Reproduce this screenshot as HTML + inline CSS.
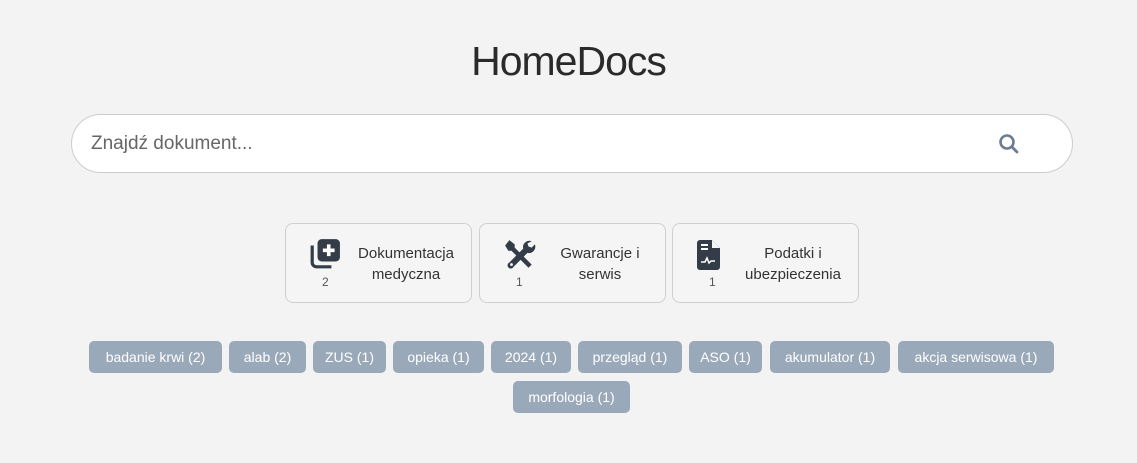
<!DOCTYPE html>
<html><head><meta charset="utf-8"><style>
*{box-sizing:border-box;margin:0;padding:0}
body{width:1137px;height:463px;background:#f3f3f3;font-family:"Liberation Sans",sans-serif;position:relative;overflow:hidden}
h1{position:absolute;top:38px;left:0;width:1137px;text-align:center;font-weight:400;font-size:41px;color:#2a2a2a;letter-spacing:-1px}
.search{position:absolute;left:71px;top:114px;width:1002px;height:59px;background:#fff;border:1px solid #ccc;border-radius:30px}
.search span{position:absolute;left:19px;top:18px;font-size:19px;color:#666}
.search svg{position:absolute;left:926px;top:18px}
.card{position:absolute;top:223px;width:187px;height:80px;background:#f5f5f5;border:1px solid #cfcfcf;border-radius:8px}
.card svg{position:absolute;left:23px;top:14px}
.card .n{position:absolute;left:36px;top:51px;font-size:12px;color:#555}
.card .t{position:absolute;left:62px;width:116px;top:19px;text-align:center;font-size:15px;line-height:21px;color:#333}
.tag{position:absolute;height:32px;background:#9aa9ba;color:#fff;border-radius:5px;font-size:14px;line-height:32px;text-align:center}
</style></head><body>
<h1>HomeDocs</h1>
<div class="search"><span>Znajdź dokument...</span>
<svg width="22" height="22" viewBox="0 0 22 22"><circle cx="9" cy="9" r="6.5" fill="none" stroke="#6b7d92" stroke-width="2.6"/><path d="M14 14l5 5" stroke="#6b7d92" stroke-width="2.8" stroke-linecap="round"/></svg></div>

<div class="card" style="left:285px">
<svg width="32" height="32" viewBox="0 0 30 30"><path d="M3 7v16a4 4 0 0 0 4 4h14" fill="none" stroke="#333c47" stroke-width="3"/><rect x="8" y="1" width="21" height="21" rx="4" fill="#333c47"/><path d="M18.5 6v11M13 11.5h11" stroke="#fff" stroke-width="3.4"/></svg>
<div class="n">2</div><div class="t">Dokumentacja medyczna</div></div>

<div class="card" style="left:479px">
<svg width="34" height="34" viewBox="0 0 32 32"><path d="M4 2l5 4v3l16 16-3 3L6 12H3L0 7z" fill="#333c47" transform="translate(2,0)"/><path d="M27 3a6 6 0 0 0-8 7L6 23a3 3 0 1 0 4 4l13-13a6 6 0 0 0 7-8l-3 3-3-1-1-3z" fill="#333c47"/><circle cx="8" cy="25" r="1.3" fill="#f5f5f5"/></svg>
<div class="n">1</div><div class="t">Gwarancje i serwis</div></div>

<div class="card" style="left:672px">
<svg width="30" height="34" viewBox="0 0 30 32"><path d="M4 1h12l8 8v19a3 3 0 0 1-3 3H4a3 3 0 0 1-3-3V4a3 3 0 0 1 3-3z" fill="#333c47"/><path d="M16 1v8h8" fill="#f5f5f5"/><path d="M5 6h7M5 10h7" stroke="#fff" stroke-width="2"/><path d="M5 23h4l2-4 2 5 2-2h4" fill="none" stroke="#fff" stroke-width="1.5"/></svg>
<div class="n">1</div><div class="t">Podatki i ubezpieczenia</div></div>

<div class="tag" style="left:89px;top:341px;width:133px">badanie krwi (2)</div>
<div class="tag" style="left:229px;top:341px;width:77px">alab (2)</div>
<div class="tag" style="left:313px;top:341px;width:73px">ZUS (1)</div>
<div class="tag" style="left:393px;top:341px;width:91px">opieka (1)</div>
<div class="tag" style="left:491px;top:341px;width:80px">2024 (1)</div>
<div class="tag" style="left:578px;top:341px;width:104px">przegląd (1)</div>
<div class="tag" style="left:689px;top:341px;width:73px">ASO (1)</div>
<div class="tag" style="left:770px;top:341px;width:120px">akumulator (1)</div>
<div class="tag" style="left:898px;top:341px;width:156px">akcja serwisowa (1)</div>
<div class="tag" style="left:513px;top:381px;width:117px">morfologia (1)</div>
</body></html>
